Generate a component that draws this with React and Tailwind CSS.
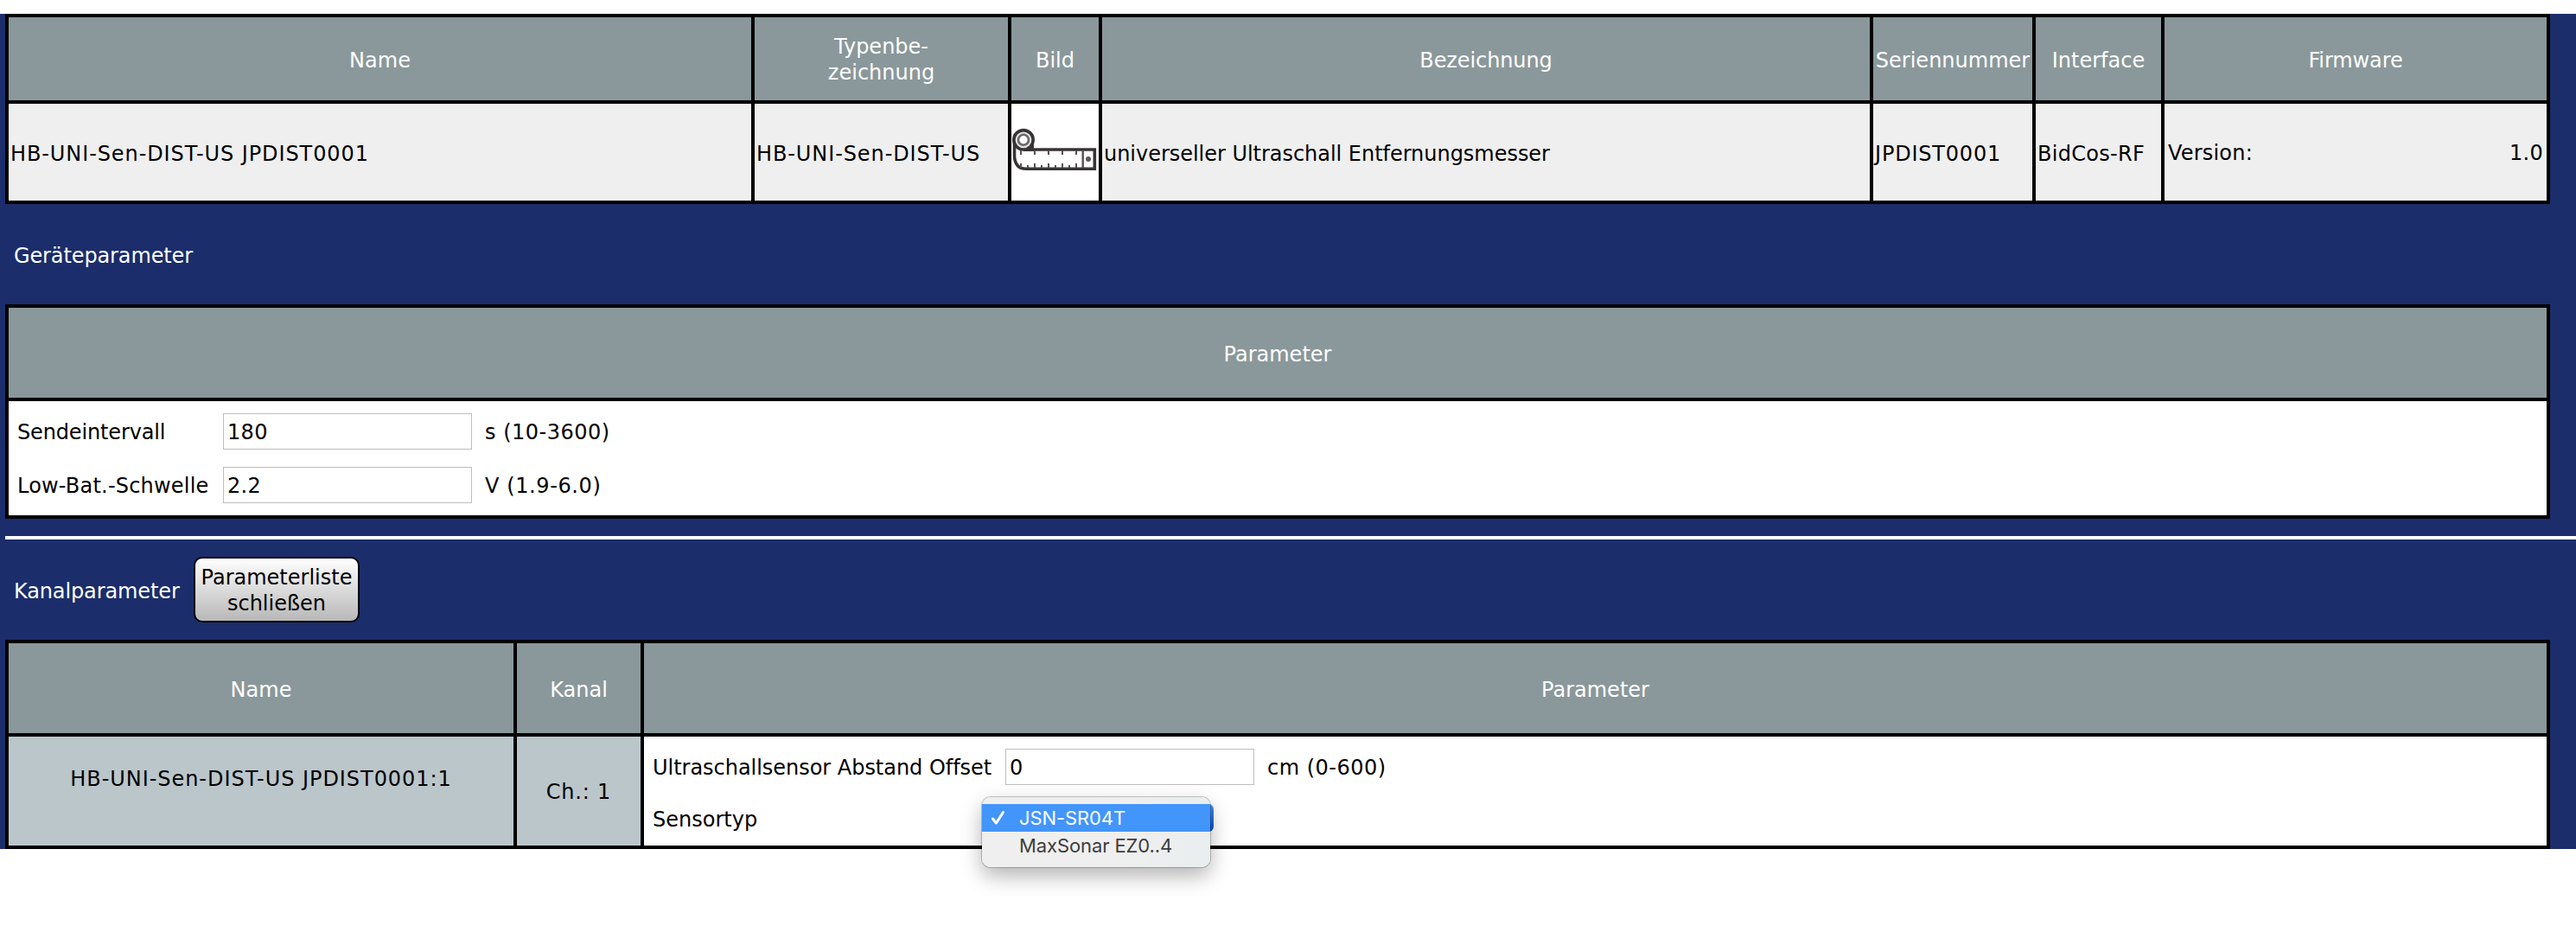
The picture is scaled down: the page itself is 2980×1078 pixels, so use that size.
const Th = ({ children, className = "pt-[4px]" }) => (
  <div className={`flex items-center justify-center bg-[#8a989b] text-center text-white ${className}`}>
    <span>{children}</span>
  </div>
);

const Td = ({ children, className = "" }) => (
  <div className={`flex items-center whitespace-nowrap bg-[#efefef] pl-[2px] pt-[4px] ${className}`}>
    <span>{children}</span>
  </div>
);

const Field = ({ value }) => (
  <input
    className="h-[42px] w-[288px] border border-[#bdbdbd] bg-white pl-[4px] pt-[2px] tracking-[0.3px] outline-none"
    defaultValue={value}
  />
);

const TapeMeasure = () => (
  <svg className="block h-[56px] w-[101px]" viewBox="0 0 101 56" fill="none" stroke="#383436">
    <path d="M3.500 14V32Q4 47.300 17 47.300H96.300V25H24" strokeWidth="3.600" />
    <path d="M25 13V26H14Q22 22 25 13Z" fill="#383436" strokeWidth="2" />
    <circle cx="14" cy="13.800" r="11.200" fill="#e2e2e2" strokeWidth="3.600" />
    <circle cx="14" cy="13.800" r="6" fill="#fff" stroke="#6b6769" strokeWidth="2.600" />
    <path d="M82.700 26V46" stroke="#555153" strokeWidth="2.400" />
    <path
      d="M11 26V31M27 26V31M43 26V31M59 26V31M75 26V31M11 41V46M19 43V46M27 41V46M35 43V46M43 41V46M51 43V46M59 41V46M67 43V46M75 41V46"
      stroke="#555153"
      strokeWidth="2"
    />
    <circle cx="89" cy="36" r="3" fill="#5a5658" stroke="none" />
  </svg>
);

const DeviceTable = () => (
  <div className="grid w-[2944px] grid-cols-[859px_293px_101px_888px_184px_145px_442px] grid-rows-[96px_112px] gap-[4px] border-4 border-black bg-black">
    <Th>Name</Th>
    <Th className="pt-[2px]">
      Typenbe-
      <br />
      zeichnung
    </Th>
    <Th>Bild</Th>
    <Th className="pt-[4px] tracking-[-0.1px]">Bezeichnung</Th>
    <Th>Seriennummer</Th>
    <Th>Interface</Th>
    <Th className="pt-[4px] tracking-[-0.1px]">Firmware</Th>
    <Td className="tracking-[0.9px]">HB-UNI-Sen-DIST-US JPDIST0001</Td>
    <Td className="tracking-[0.9px]">HB-UNI-Sen-DIST-US</Td>
    <div className="flex items-center bg-white">
      <TapeMeasure />
    </div>
    <Td className="tracking-[-0.03px]">universeller Ultraschall Entfernungsmesser</Td>
    <Td className="tracking-[0.8px]">JPDIST0001</Td>
    <Td className="tracking-[0.3px]">BidCos-RF</Td>
    <div className="flex items-center justify-between bg-[#efefef] pb-[2px] pl-[4px] pr-[4px] pt-[4px]">
      <span className="tracking-[0.2px]">Version:</span>
      <span className="tracking-[0.3px]">1.0</span>
    </div>
  </div>
);

const DeviceParameters = () => (
  <div className="grid w-[2944px] grid-rows-[104px_132px] gap-[4px] border-4 border-black bg-black">
    <Th>Parameter</Th>
    <div className="grid grid-cols-[238px_303px_auto] grid-rows-[42px_42px] content-start items-center gap-y-[20px] bg-white pl-[10px] pt-[14px]">
      <span className="pt-[2px] tracking-[-0.15px]">Sendeintervall</span>
      <Field value="180" />
      <span className="pt-[2px] tracking-[0.5px]">s (10-3600)</span>
      <span className="pt-[2px] tracking-[0.2px]">Low-Bat.-Schwelle</span>
      <Field value="2.2" />
      <span className="pt-[2px] tracking-[0.6px]">V (1.9-6.0)</span>
    </div>
  </div>
);

const SensorSelect = () => (
  <div className="relative top-[-1px] ml-[-25px] h-[32px] w-[266px] rounded-[6px] bg-linear-to-b from-[#4a8ff0] to-[#0b4fd0]">
    <div className="absolute left-[-2px] top-[-8px] h-[81px] w-[264px] rounded-[10px] bg-linear-to-r from-[#efefef] from-60% to-[#e9eeef] pt-[8px] font-[Inter,sans-serif] text-[22px] tracking-[-0.1px] shadow-[0_0_0_1px_rgba(0,0,0,0.22),0_10px_24px_rgba(0,0,0,0.3)]">
      <div className="flex h-[32px] items-center bg-[#4295fb] pl-[10px] text-white">
        <svg className="mr-[16px] h-[18px] w-[17px]" viewBox="0 0 17 18" fill="none" stroke="white" strokeWidth="3">
          <path d="M2.500 10L6.500 15L14.500 2.500" strokeLinecap="round" strokeLinejoin="round" />
        </svg>
        <span>JSN-SR04T</span>
      </div>
      <div className="flex h-[32px] items-center pl-[43px] text-[#3d3d3d]">
        <span>MaxSonar EZ0..4</span>
      </div>
    </div>
  </div>
);

const ChannelTable = () => (
  <div className="grid w-[2944px] grid-cols-[584px_143px_2201px] grid-rows-[104px_126px] gap-[4px] border-4 border-black bg-black">
    <Th>Name</Th>
    <Th>Kanal</Th>
    <Th>Parameter</Th>
    <div className="flex justify-center bg-[#bbc6cb] pt-[34px] tracking-[0.95px]">HB-UNI-Sen-DIST-US JPDIST0001:1</div>
    <div className="flex items-center justify-center bg-[#bbc6cb] pt-[2px] tracking-[0.8px]">Ch.: 1</div>
    <div className="grid grid-cols-[408px_303px_auto] grid-rows-[42px_42px] content-start items-center gap-y-[18px] bg-white pl-[10px] pt-[14px]">
      <span className="pt-[2px] tracking-[-0.03px]">Ultraschallsensor Abstand Offset</span>
      <Field value="0" />
      <span className="pt-[2px] tracking-[0.5px]">cm (0-600)</span>
      <span className="pt-[2px]">Sensortyp</span>
      <SensorSelect />
    </div>
  </div>
);

export default function App() {
  return (
    <div className="h-[1078px] w-[2980px] overflow-hidden bg-white pt-[16px] font-['DejaVu_Sans',Verdana,sans-serif] text-[24px] leading-[30px] text-black">
      <div className="h-[966px] bg-[#1b2d6b] pl-[6px]">
        <DeviceTable />
        <div className="flex h-[116px] items-center pl-[10px] pt-[4px] tracking-[-0.12px] text-white">Geräteparameter</div>
        <DeviceParameters />
        <div className="mt-[20px] h-[4px] bg-white" />
        <div className="flex h-[116px] items-center pl-[10px] text-white">
          <span className="w-[208px] pt-[4px] tracking-[-0.12px]">Kanalparameter</span>
          <button className="h-[76px] w-[192px] rounded-[10px] border-2 border-black bg-linear-to-b from-white to-[#b8b8b8] pt-[2px] text-center text-black">
            Parameterliste
            <br />
            schließen
          </button>
        </div>
        <ChannelTable />
      </div>
    </div>
  );
}
